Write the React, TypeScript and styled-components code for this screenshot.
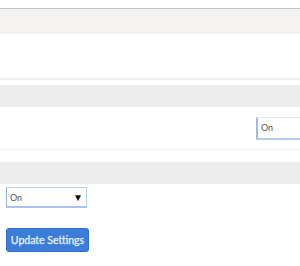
import React from "react";
import styled, { createGlobalStyle } from "styled-components";

const Global = createGlobalStyle`
  html, body { margin: 0; padding: 0; background: #fff; overflow: hidden; }
  body { font-family: Lato, "Open Sans", "Liberation Sans", sans-serif; }
`;

const Page = styled.div`
  width: 300px;
  padding-top: 8px;
  display: flex;
  flex-direction: column;
  overflow: hidden;
`;

const HeaderBand = styled.div<{ $h: number; $bg: string; $top?: boolean }>`
  height: ${(p) => p.$h}px;
  background: ${(p) => p.$bg};
  border-top: ${(p) => (p.$top ? "1px solid #c4c4c4" : "none")};
`;

const Row = styled.div<{ $h: number; $line: number; $gap: number }>`
  height: ${(p) => p.$h}px;
  border-bottom: ${(p) => p.$line}px solid #efefef;
  margin-bottom: ${(p) => p.$gap}px;
  display: flex;
  align-items: center;
  padding-left: 256px;
  overflow: hidden;
`;

const Select = styled.div<{ $w: number }>`
  width: ${(p) => p.$w}px;
  height: 23px;
  box-sizing: border-box;
  border: 1px solid #dfe6f0;
  border-left: 2px solid #9dbbe6;
  border-bottom: 2px solid #b5cbec;
  border-radius: 1px;
  font-size: 9px;
  color: #555;
  display: flex;
  align-items: center;
  justify-content: space-between;
  padding: 0 5px 0 3px;
  flex-shrink: 0;
`;

const Arrow = styled.span`
  font-size: 10px;
  color: #111;
`;

const Controls = styled.div`
  padding: 3px 0 0 6px;
  display: flex;
  flex-direction: column;
  align-items: flex-start;
  gap: 20px;
`;

const SmallSelect = styled(Select)`
  height: 21px;
  border: 1px solid #b8cdee;
  border-left: 1px solid #8fb2e6;
  border-bottom: 2px solid #a9c3ec;
  padding-right: 3px;
`;

const Button = styled.button`
  width: 83px;
  height: 24px;
  background: #3b7dd8;
  border: 1px solid #2f6fcb;
  border-radius: 3px;
  color: #eef4fc;
  font-family: Lato, "Liberation Sans", sans-serif;
  font-size: 10.5px;
  font-weight: 400;
  -webkit-text-stroke: 0.25px #eef4fc;
  padding: 0;
  display: flex;
  align-items: center;
  justify-content: center;
`;

export default function App() {
  return (
    <>
      <Global />
      <Page>
        <HeaderBand $h={25} $bg="#f4f3f2" $top />
        <Row $h={44} $line={2} $gap={5} />
        <HeaderBand $h={22} $bg="#ededed" />
        <Row $h={42} $line={1} $gap={12}>
          <Select $w={80}>On</Select>
        </Row>
        <HeaderBand $h={22} $bg="#ededed" />
        <Controls>
          <SmallSelect $w={81}>
            On<Arrow>▼</Arrow>
          </SmallSelect>
          <Button>Update Settings</Button>
        </Controls>
      </Page>
    </>
  );
}
